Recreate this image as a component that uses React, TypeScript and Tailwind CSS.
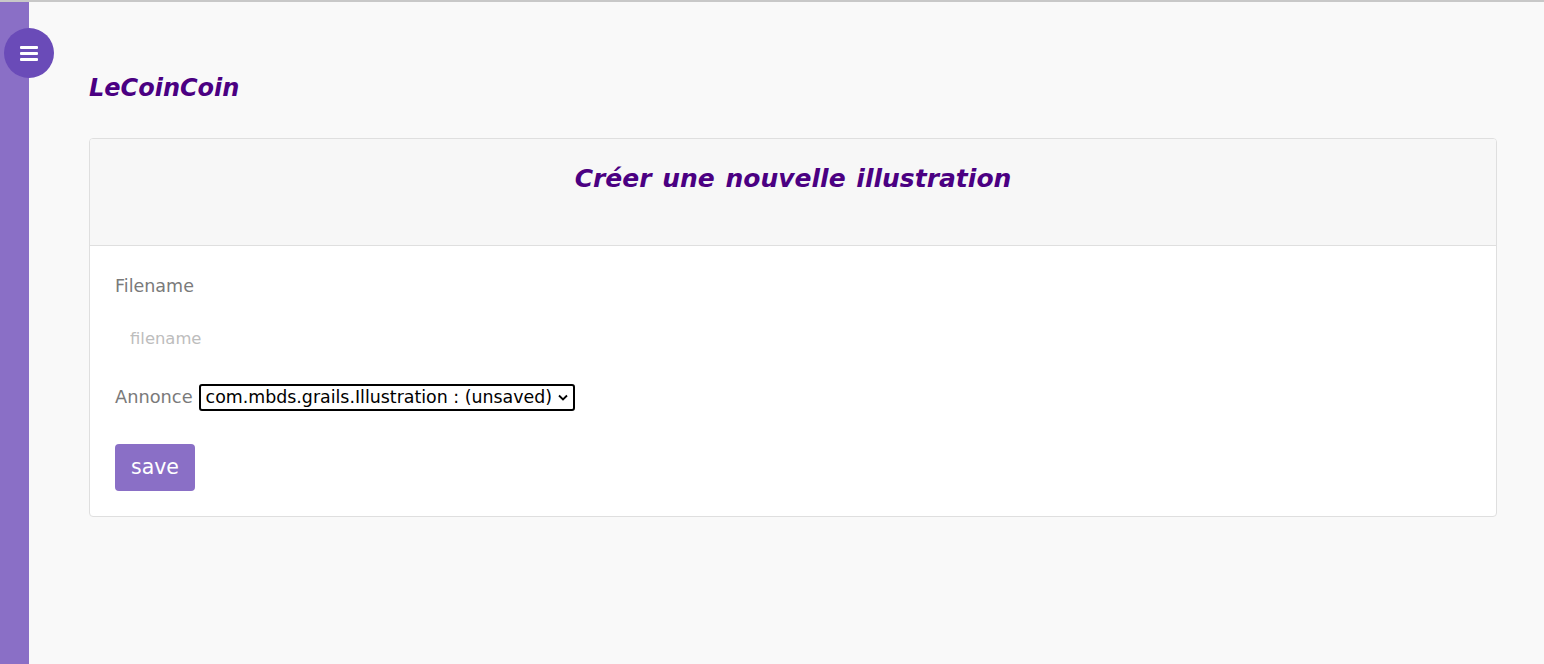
export default function App() {
  const comic = "font-['DejaVu_Sans',sans-serif] font-bold italic text-[#4b0082]";
  const body = "font-['DejaVu_Sans',sans-serif]";

  return (
    <div className={`flex min-h-[664px] border-t-2 border-[#c8c8c8] bg-[#f9f9f9] ${body}`}>
      <aside className="relative w-[29px] shrink-0 bg-[#8a6fc6]">
        <button
          type="button"
          aria-label="Menu"
          className="absolute left-[4px] top-[26px] flex h-[50px] w-[50px] items-center justify-center rounded-full bg-[#6a4bb8]"
        >
          <svg width="18" height="15" viewBox="0 0 18 15" aria-hidden="true">
            <rect x="0" y="0" width="18" height="3" rx="1" fill="#fff" />
            <rect x="0" y="6" width="18" height="3" rx="1" fill="#fff" />
            <rect x="0" y="12" width="18" height="3" rx="1" fill="#fff" />
          </svg>
        </button>
      </aside>

      <main className="flex-1 pl-[60px] pr-[47px] pt-[68px]">
        <h1 className={`${comic} text-[24px] leading-[36px]`}>LeCoinCoin</h1>

        <div className="mt-[32px] overflow-hidden rounded-[4px] border border-[#dfdfdf] bg-white">
          <div className="flex h-[107px] justify-center border-b border-[#dfdfdf] bg-[#f7f7f7] pt-[20px]">
            <h2 className={`${comic} text-[25px] leading-[40px] [word-spacing:2px]`}>
              Créer une nouvelle illustration
            </h2>
          </div>

          <form className="px-[25px] pb-[25px] pt-[28px]">
            <label className="block text-[17.5px] leading-[24px] text-[#7a7a7a]">Filename</label>
            <input
              type="text"
              placeholder="filename"
              className="mt-[19px] block h-[42px] w-[300px] bg-transparent px-[15px] text-[16.4px] text-[#555] outline-none placeholder:text-[#bdbdbd]"
            />
            <div className="mt-[25px] flex items-center gap-[6px]">
              <span className="text-[17.8px] text-[#7a7a7a]">Annonce</span>
              <div className="relative flex h-[27px] items-center rounded-[3px] border-2 border-black bg-white pl-[5px] pr-[5px]">
                <span className="text-[17.4px] leading-none text-black">com.mbds.grails.Illustration : (unsaved)</span>
                <svg className="ml-[6px]" width="10" height="7" viewBox="0 0 10 7" aria-hidden="true">
                  <path d="M1 1.5l4 4 4-4" fill="none" stroke="#000" strokeWidth="1.8" />
                </svg>
              </div>
            </div>
            <button
              type="button"
              className="mt-[33px] h-[47px] w-[80px] rounded-[4px] bg-[#8a6fc6] text-[20.5px] text-white"
            >
              save
            </button>
          </form>
        </div>
      </main>
    </div>
  );
}
